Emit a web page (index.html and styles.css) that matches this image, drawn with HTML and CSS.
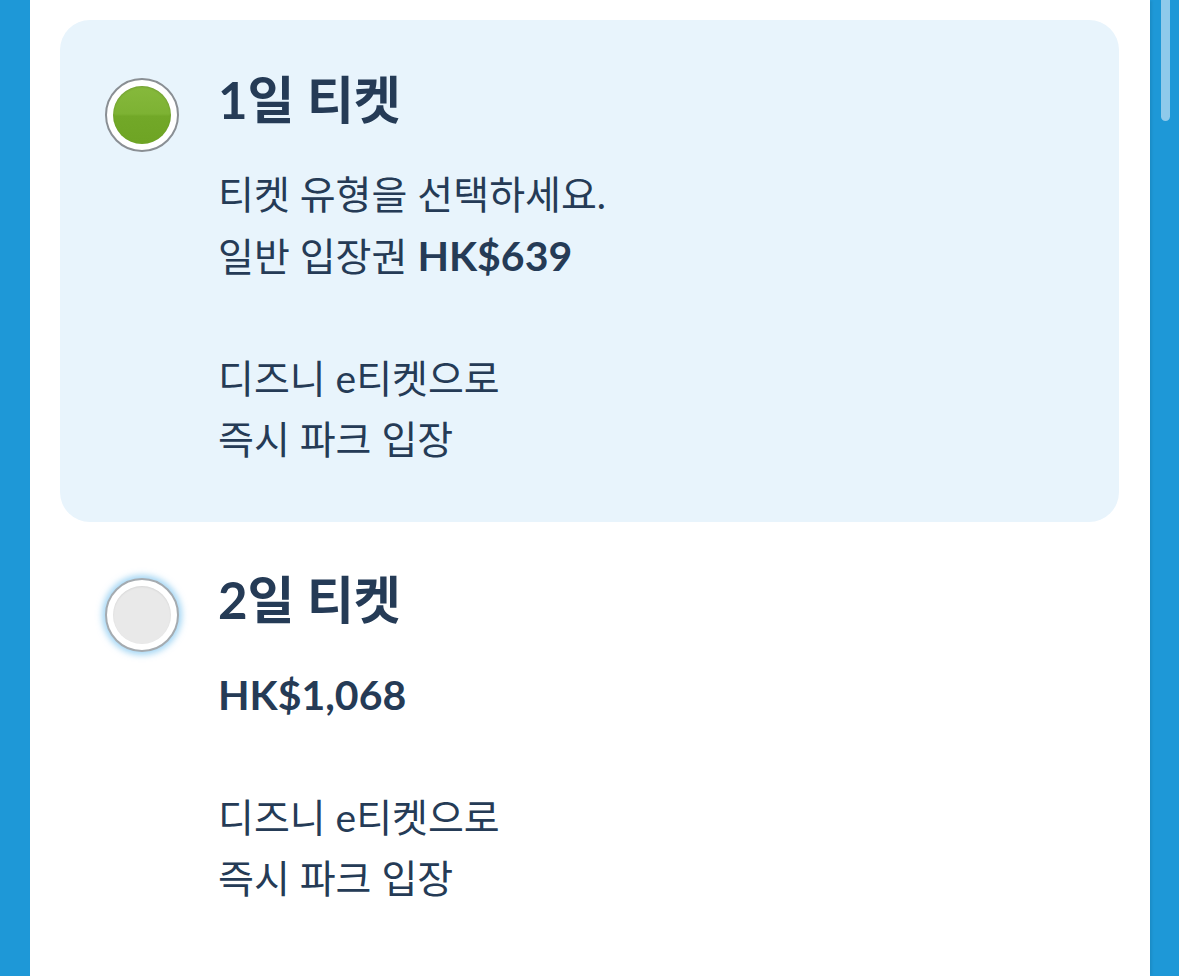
FILE: index.html
```html
<!DOCTYPE html>
<html lang="ko">
<head>
    <meta charset="UTF-8">
    <meta name="viewport" content="width=device-width, initial-scale=1.0">
    <title>티켓 선택</title>
    <link rel="stylesheet" href="styles.css">
</head>
<body>
    <div class="panel">
        <div class="option selected">
            <span class="radio checked"></span>
            <div class="info">
                <h2 class="title">1일 티켓</h2>
                <p class="desc">티켓 유형을 선택하세요.<br>일반 입장권 <b>HK$639</b><br><br>디즈니 e티켓으로<br>즉시 파크 입장</p>
            </div>
        </div>
        <div class="option">
            <span class="radio focus"></span>
            <div class="info">
                <h2 class="title">2일 티켓</h2>
                <p class="desc"><b>HK$1,068</b><br><br>디즈니 e티켓으로<br>즉시 파크 입장</p>
            </div>
        </div>
    </div>
    <div class="scrollbar"></div>
</body>
</html>
```

FILE: styles.css
```css
html, body {
    margin: 0;
    height: 100%;
}
body {
    background: #1e98d7;
    font-family: Lato, "Noto Sans CJK KR", sans-serif;
    color: #253b56;
    overflow: hidden;
}
.panel {
    background: #fff;
    margin: 0 29px 0 30px;
    min-height: 100%;
    padding: 20px 31px 0 30px;
    box-sizing: border-box;
    box-shadow: 3px 0 2px -1px rgba(0, 0, 0, 0.08);
}
.option {
    display: flex;
    gap: 39px;
    padding: 50px 0 52px 45px;
    border-radius: 30px;
}
.option + .option {
    padding-top: 48px;
}
.option.selected {
    background: #e8f4fc;
}
.radio {
    flex: none;
    width: 74px;
    height: 74px;
    margin-top: 8px;
    border-radius: 50%;
    box-sizing: border-box;
    border: 2px solid #8a8f94;
    background: #fff;
    position: relative;
}
.radio::after {
    content: "";
    position: absolute;
    top: 6px;
    left: 6px;
    right: 6px;
    bottom: 6px;
    border-radius: 50%;
}
.radio.checked::after {
    background: linear-gradient(#86b93c 0%, #7db233 48%, #72a828 52%, #6ea424 100%);
    box-shadow: inset 0 1px 2px rgba(0, 0, 0, 0.15);
}
.radio.focus {
    border-color: #a5abb0;
    box-shadow: 0 0 6px 3px rgba(90, 180, 235, 0.55);
}
.radio.focus::after {
    background: #e9e9e9;
    box-shadow: inset 0 1px 2px rgba(0, 0, 0, 0.08);
}
.title {
    margin: 0;
    font-size: 51px;
    line-height: 60px;
    font-weight: 700;
}
.desc {
    margin: 34px 0 0;
    font-size: 39px;
    line-height: 61px;
    font-weight: 400;
}
.desc b {
    font-weight: 700;
    font-size: 41px;
}
.scrollbar {
    position: absolute;
    top: 0;
    left: 1161px;
    width: 9px;
    height: 121px;
    background: #8fcaeb;
    border-radius: 0 0 5px 5px;
}
```
